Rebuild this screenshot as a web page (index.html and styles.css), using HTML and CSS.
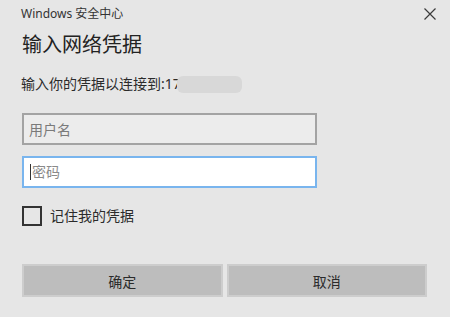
FILE: index.html
```html
<!DOCTYPE html>
<html>
<head>
    <meta charset="utf-8" />
    <title>Windows 安全中心</title>
    <link rel="stylesheet" href="styles.css">
</head>
<body>
    <div class="dialog">
        <div class="titlebar">
            <span class="app-name">Windows 安全中心</span>
            <button class="close" title="关闭">
                <svg width="12" height="12" viewBox="0 0 12 12">
                    <path d="M0.5 0.5 L11.5 11.5 M11.5 0.5 L0.5 11.5" stroke="#3a3a3a" stroke-width="1.2" fill="none" />
                </svg>
            </button>
        </div>

        <h1>输入网络凭据</h1>

        <p class="prompt">
            输入你的凭据以连接到:17<span class="redacted"></span>
        </p>

        <input class="field" type="text" placeholder="用户名" />
        <div class="field focused">
            <span class="caret"></span><span class="hint">密码</span>
        </div>

        <label class="remember">
            <span class="box"></span>
            <span>记住我的凭据</span>
        </label>

        <div class="actions">
            <button class="btn">确定</button>
            <button class="btn">取消</button>
        </div>
    </div>
</body>
</html>
```

FILE: styles.css
```css
html, body {
    margin: 0;
    background: #e6e6e6;
}
body {
    font-family: "Noto Sans", "Noto Sans CJK SC", sans-serif;
    color: #2b2b2b;
}
.dialog {
    padding: 0 23px 0 22px;
}

.titlebar {
    height: 28px;
    display: flex;
    align-items: center;
    justify-content: space-between;
}
.app-name {
    font-size: 12px;
    line-height: 16px;
    color: #333;
    margin-left: -1px;
}
.close {
    border: 0;
    background: none;
    padding: 0;
    margin-right: -9px;
    width: 12px;
    height: 12px;
    display: flex;
}

h1 {
    margin: 3px 0 0;
    font-size: 20px;
    line-height: 28px;
    font-weight: normal;
    color: #222;
}

.prompt {
    position: relative;
    margin: 15px 0 0 -1px;
    font-size: 14px;
    line-height: 20px;
    color: #2b2b2b;
}
/* blurred address */
.redacted {
    position: absolute;
    left: 156px;
    top: 2px;
    width: 65px;
    height: 17px;
    border-radius: 6px;
    background: #d8d8d8;
}

.field {
    display: flex;
    align-items: center;
    box-sizing: border-box;
    width: 295px;
    height: 32px;
    margin: 0;
    padding: 0 5px;
    font-family: inherit;
    font-size: 14px;
    background: #ececec;
    border: 2px solid #a3a3a3;
    outline: none;
}
input.field {
    margin-top: 19px;
}
input.field::placeholder {
    color: #7a7a7a;
}
.field.focused {
    margin-top: 11px;
    background: #fff;
    border-color: #79b5ee;
    color: #8a8a8a;
}
.caret {
    width: 1px;
    height: 16px;
    background: #333;
    margin: 0 1px 0 1px;
}
.hint {
    line-height: 20px;
}

.remember {
    display: flex;
    align-items: center;
    gap: 8px;
    margin-top: 18px;
    font-size: 14px;
    line-height: 20px;
    color: #2b2b2b;
}
.box {
    box-sizing: border-box;
    width: 20px;
    height: 20px;
    border: 2px solid #333;
}

.actions {
    display: grid;
    grid-template-columns: 1fr 1fr;
    gap: 4px;
    margin-top: 38px;
}
.btn {
    height: 33px;
    font-family: inherit;
    font-size: 14px;
    color: #2b2b2b;
    background: #bdbdbd;
    border: 2px solid #cdcdcd;
    cursor: pointer;
}
```
